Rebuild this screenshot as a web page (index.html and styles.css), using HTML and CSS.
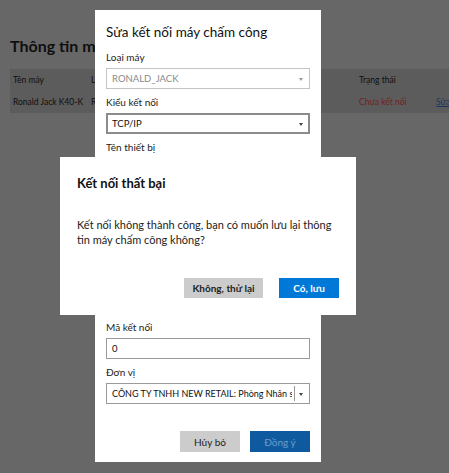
FILE: index.html
```html
<!DOCTYPE html>
<html lang="vi">
<head>
<meta charset="utf-8">
<title>Sửa kết nối máy chấm công</title>
<link rel="stylesheet" href="styles.css">
</head>
<body>
<div class="page">
  <h1 class="page-title">Thông tin máy chấm công</h1>
  <div class="table">
    <div class="row row-head">
      <span>Tên máy</span><span>Loại máy</span><span>Kiểu kết nối</span><span>Trạng thái</span><span></span>
    </div>
    <div class="row">
      <span>Ronald Jack K40-K</span><span>RONALD_JACK</span><span>TCP/IP</span><span class="status-off">Chưa kết nối</span><span class="link">Sửa</span>
    </div>
  </div>
</div>

<div class="overlay"></div>

<div class="dialog edit">
  <h2 class="edit-title">Sửa kết nối máy chấm công</h2>
  <div class="field">
    <div class="label">Loại máy</div>
    <div class="control select disabled">RONALD_JACK</div>
  </div>
  <div class="field">
    <div class="label">Kiểu kết nối</div>
    <div class="control select strong">TCP/IP</div>
  </div>
  <div class="field">
    <div class="label">Tên thiết bị</div>
    <div class="control">Ronald Jack K40-K</div>
  </div>
  <div class="field">
    <div class="label">Địa chỉ IP</div>
    <div class="control">192.168.1.201</div>
  </div>
  <div class="field">
    <div class="label">Cổng</div>
    <div class="control">4370</div>
  </div>
  <div class="field">
    <div class="label">Mật khẩu</div>
    <div class="control"></div>
  </div>
  <div class="field">
    <div class="label">Mã kết nối</div>
    <div class="control">0</div>
  </div>
  <div class="field">
    <div class="label">Đơn vị</div>
    <div class="control select split"><span class="select-text">CÔNG TY TNHH NEW RETAIL: Phòng Nhân sự</span></div>
  </div>
  <div class="edit-actions">
    <button class="btn btn-gray btn-edit">Hủy bỏ</button>
    <button class="btn btn-blue-disabled btn-edit">Đồng ý</button>
  </div>
</div>

<div class="dialog alert">
  <h2 class="alert-title">Kết nối thất bại</h2>
  <p class="alert-text">Kết nối không thành công, bạn có muốn lưu lại thông tin máy chấm công không?</p>
  <div class="alert-actions">
    <button class="btn btn-gray btn-retry">Không, thử lại</button>
    <button class="btn btn-blue btn-save">Có, lưu</button>
  </div>
</div>
</body>
</html>
```
FILE: styles.css
```css
* { box-sizing: border-box; }

body {
  margin: 0;
  width: 449px;
  height: 473px;
  overflow: hidden;
  position: relative;
  background: #cecece;
  font-family: Lato, "Noto Sans", sans-serif;
  color: #222;
}

.page {
  padding: 35px 10px 0;
}

.page-title {
  margin: 0 0 12px;
  font-size: 16px;
  line-height: 22px;
  font-weight: 700;
  color: #1e1e1e;
  white-space: nowrap;
}

.table {
  width: 520px;
  background: #b8b8b8;
}

.row {
  display: grid;
  grid-template-columns: 78px 120px 148px 77px 60px;
  padding: 0 3px;
  height: 22px;
  align-items: center;
  font-size: 8.5px;
  white-space: nowrap;
}

.row span { overflow: hidden; }

.status-off { color: #e04444; }

.link {
  color: #3f6fb8;
  text-decoration: underline;
}

.overlay {
  position: absolute;
  inset: 0;
  background: rgba(0, 0, 0, 0.5);
}

.dialog {
  position: absolute;
  background: #fff;
  display: flex;
  flex-direction: column;
}

.edit {
  left: 95px;
  top: 10px;
  width: 226px;
  height: 452px;
  padding: 12px 11px 10px;
}

.edit-title {
  margin: 0 0 8px;
  font-size: 13.5px;
  line-height: 20px;
  font-weight: 400;
  color: #111;
  white-space: nowrap;
}

.field {
  display: flex;
  flex-direction: column;
  gap: 4px;
  margin-bottom: 6px;
}

.label {
  font-size: 10px;
  line-height: 14px;
  color: #222;
}

.control {
  position: relative;
  height: 21px;
  border: 1px solid #9a9a9a;
  padding: 0 5px;
  display: flex;
  align-items: center;
  font-size: 9.5px;
  color: #111;
  white-space: nowrap;
  overflow: hidden;
}

.select::after {
  content: "";
  position: absolute;
  right: 6px;
  top: 9px;
  border-left: 2.5px solid transparent;
  border-right: 2.5px solid transparent;
  border-top: 3px solid #444;
}

.select.disabled {
  border-color: #c4c4c4;
  color: #8a8a8a;
}

.select.disabled::after { border-top-color: #999; }

.select.strong {
  border: 2px solid #8c8c8c;
  padding-left: 4px;
}

.select.strong::after { right: 5px; top: 8px; }

.select.split {
  padding-right: 17px;
  font-size: 9px;
}

.select.split::before {
  content: "";
  position: absolute;
  right: 14px;
  top: 2px;
  bottom: 2px;
  border-left: 1px solid #9a9a9a;
}

.select-text {
  overflow: hidden;
  display: block;
}

.edit-actions {
  margin-top: auto;
  display: flex;
  justify-content: flex-end;
  gap: 10px;
}

.btn {
  border: 0;
  margin: 0;
  padding: 0;
  font-family: inherit;
  font-size: 10px;
  display: flex;
  align-items: center;
  justify-content: center;
}

.btn-edit { width: 60px; height: 21px; }

.btn-gray { background: #cccccc; color: #222; }

.btn-blue { background: #0078d7; color: #fff; }

.btn-blue-disabled { background: #0f5a9e; color: #6b9ccc; }

.alert {
  left: 60px;
  top: 157px;
  width: 296px;
  height: 158px;
  padding: 16px 17px 17px;
}

.alert-title {
  margin: 0 0 24px;
  font-size: 13px;
  line-height: 20px;
  font-weight: 700;
  color: #111;
}

.alert-text {
  margin: 0;
  max-width: 258px;
  font-size: 11px;
  line-height: 15px;
  color: #222;
}

.alert-actions {
  margin-top: auto;
  display: flex;
  justify-content: flex-end;
  gap: 16px;
}

.alert-actions .btn { height: 20px; font-weight: 700; }

.btn-retry { width: 79px; }

.btn-save { width: 60px; }
```
